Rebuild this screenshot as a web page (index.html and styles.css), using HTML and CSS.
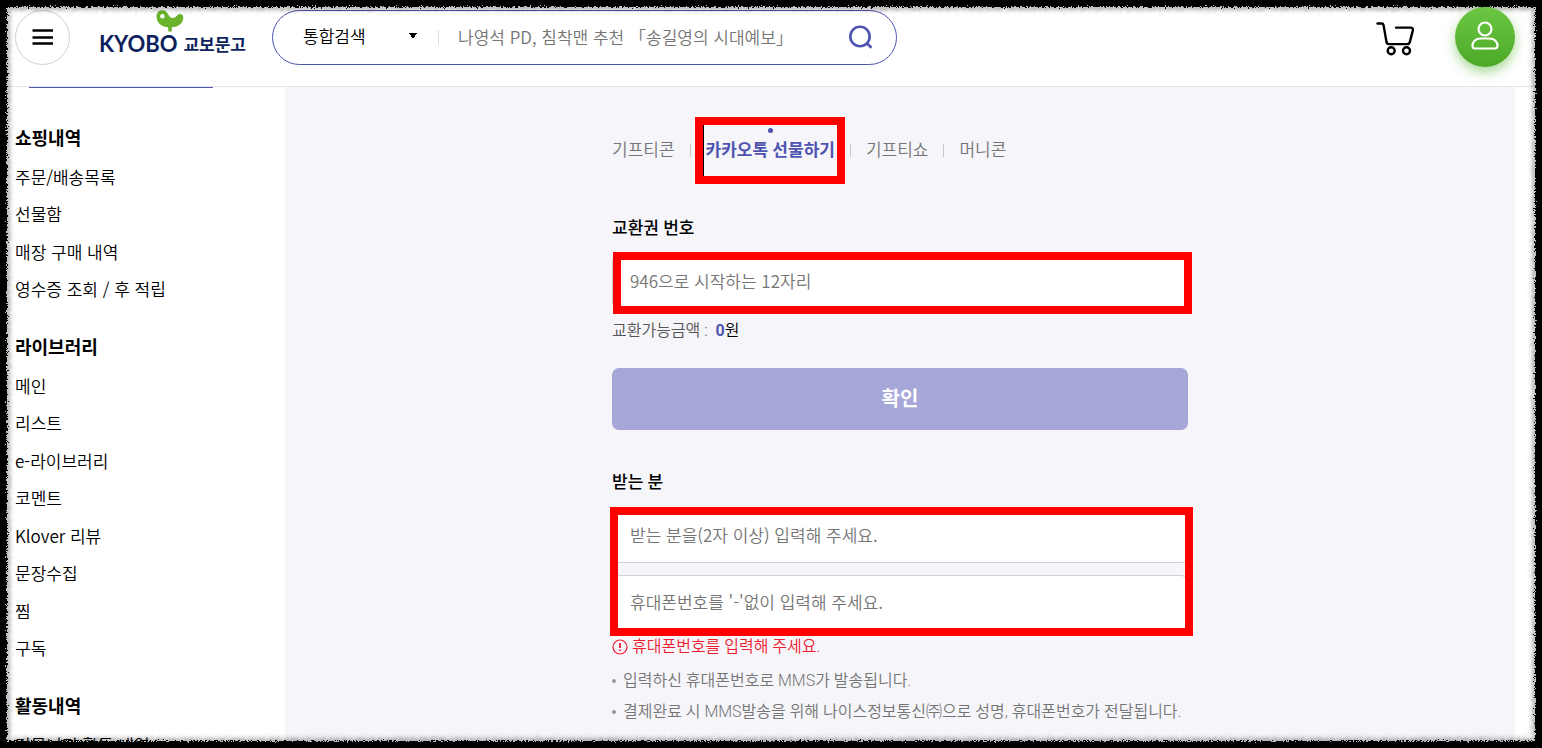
FILE: index.html
```html
<!DOCTYPE html>
<html lang="ko">
<head>
<meta charset="utf-8">
<title>교보문고</title>
<link rel="stylesheet" href="styles.css">
</head>
<body>
<header class="header">
  <button class="menu-btn" aria-label="메뉴"><svg width="22" height="18" viewBox="0 0 22 18"><path d="M0.500 2.500h20.500M0.500 9.500h20.500M0.500 15.500h20.500" stroke="#000" stroke-width="2.500"/></svg></button>
  <a class="logo" href="#">
    <svg class="logo-bird" width="28" height="22" viewBox="0 0 28 22"><path fill="#6ab42d" d="M6.300 .3C2.800.3.600 2.800.600 6c0 6.800 4.400 10.900 11.600 11.300v4.300h3.600v-4.300c7-.4 11.500-4.500 11.500-9.900 0-2-1.300-3.300-3.200-3.300-3.200 0-3.800 4-7.400 4C11.800 8.100 12.700.3 6.300 .3z"/><circle cx="6.400" cy="6.300" r="2.200" fill="#fff"/></svg>
    <span class="logo-text"><span class="logo-en">KYOBO</span><span class="logo-ko">교보문고</span></span>
  </a>
  <form class="search">
    <select class="search-type" aria-label="검색 범위"><option>통합검색</option></select>
    <input class="search-input" type="text" aria-label="검색어" placeholder="나영석 PD, 침착맨 추천 「송길영의 시대예보」">
    <button class="search-btn" type="button" aria-label="검색"><svg width="26" height="26" viewBox="0 0 26 26" fill="none" stroke="#4e54b0" stroke-width="2.600"><circle cx="12" cy="12.500" r="9.700"/><path d="M18.500 19l5 4.700"/></svg></button>
  </form>
  <div class="actions">
    <a class="cart" href="#" aria-label="장바구니"><svg width="38" height="38" viewBox="0 -4 38 38" fill="none" stroke="#000" stroke-width="2.400" stroke-linecap="round" stroke-linejoin="round"><path d="M1.500 1.500h4.300q1.400 0 1.700 1.400l3 17.200q.4 2 2.300 2h18.500q2 0 2.500-2l3-11.500q.6-3-2.200-3H20"/><circle cx="15.200" cy="28.700" r="3.500"/><circle cx="30.500" cy="28.700" r="3.500"/></svg></a>
    <a class="profile" href="#" aria-label="마이페이지"><svg width="28" height="32" viewBox="0 0 28 32" fill="none" stroke="#fff" stroke-width="2.200"><circle cx="14" cy="8" r="6.500"/><path d="M9.500 17.500h9c5 0 8 3.500 8 7 0 2-.8 3-2.400 3H3.900c-1.600 0-2.400-1-2.400-3 0-3.500 3-7 8-7z"/></svg></a>
  </div>
</header>
<div class="page">
  <nav class="sidebar">
    <div class="side-card"></div>
    <h2 class="side-title">쇼핑내역</h2>
    <ul class="side-list">
      <li><a href="#">주문/배송목록</a></li><li><a href="#">선물함</a></li><li><a href="#">매장 구매 내역</a></li><li><a href="#">영수증 조회 / 후 적립</a></li>
    </ul>
    <h2 class="side-title">라이브러리</h2>
    <ul class="side-list">
      <li><a href="#">메인</a></li><li><a href="#">리스트</a></li><li><a href="#">e-라이브러리</a></li><li><a href="#">코멘트</a></li><li><a href="#">Klover 리뷰</a></li><li><a href="#">문장수집</a></li><li><a href="#">찜</a></li><li><a href="#">구독</a></li>
    </ul>
    <h2 class="side-title">활동내역</h2>
    <ul class="side-list"><li><a href="#">커뮤니티 활동 내역</a></li></ul>
  </nav>
  <main class="main">
    <form class="voucher">
      <div class="tabs">
        <a class="tab" href="#">기프티콘</a>
        <a class="tab tab-on" href="#">카카오톡 선물하기<span class="mark mark-tab"></span></a>
        <a class="tab" href="#">기프티쇼</a>
        <a class="tab" href="#">머니콘</a>
      </div>
      <label class="label" for="code">교환권 번호</label>
      <div class="field">
        <input class="input" id="code" type="text" placeholder="946으로 시작하는 12자리">
        <span class="mark mark-code"></span>
      </div>
      <p class="amount">교환가능금액 : <span class="won"><b>0</b>원</span></p>
      <button class="submit" type="button">확인</button>
      <label class="label" for="name">받는 분</label>
      <div class="field">
        <input class="input" id="name" type="text" placeholder="받는 분을(2자 이상) 입력해 주세요.">
        <input class="input" type="text" aria-label="휴대폰번호" placeholder="휴대폰번호를 '-'없이 입력해 주세요.">
        <span class="mark mark-pair"></span>
      </div>
      <p class="error"><svg width="16" height="16" viewBox="0 0 16 16"><circle cx="8" cy="8" r="7" fill="none" stroke="#ee1c2e" stroke-width="1.200"/><path d="M8 4v5M8 10.500v1.500" stroke="#ee1c2e" stroke-width="1.800"/></svg>휴대폰번호를 입력해 주세요.</p>
      <ul class="notes">
        <li>입력하신 휴대폰번호로 MMS가 발송됩니다.</li>
        <li>결제완료 시 MMS발송을 위해 나이스정보통신㈜으로 성명, 휴대폰번호가 전달됩니다.</li>
      </ul>
    </form>
  </main>
</div>
<svg class="frame" aria-hidden="true">
  <filter id="soft" x="0" y="0" width="100%" height="100%"><feTurbulence type="fractalNoise" baseFrequency="0.5" numOctaves="2" seed="9"/><feDisplacementMap in="SourceGraphic" scale="8" xChannelSelector="R" yChannelSelector="G"/><feGaussianBlur stdDeviation="0.8"/></filter>
  <filter id="rough" x="0" y="0" width="100%" height="100%"><feTurbulence type="fractalNoise" baseFrequency="0.6" numOctaves="3" seed="4"/><feDisplacementMap in="SourceGraphic" scale="6" xChannelSelector="R" yChannelSelector="G"/><feGaussianBlur stdDeviation="0.3"/></filter>
  <g filter="url(#soft)" fill="none">
    <rect class="frame-soft" width="100%" height="100%"/>
    <rect class="frame-mid" width="100%" height="100%"/>
  </g>
  <g filter="url(#rough)" fill="none">
    <rect class="frame-dark" width="100%" height="100%"/>
  </g>
  <rect class="frame-edge" width="100%" height="100%" fill="none"/>
</svg>
</body>
</html>
```
FILE: styles.css
```css
* { box-sizing: border-box; }
body {
  margin: 0;
  height: 100vh;
  overflow: hidden;
  display: flex;
  flex-direction: column;
  background: #fff;
  color: #000;
  font-family: Roboto, "Noto Sans CJK KR", sans-serif;
  font-size: 17px;
  font-weight: 350;
  line-height: 25px;
}
a { color: inherit; text-decoration: none; }
ul, p, h2 { margin: 0; padding: 0; }
ul { list-style: none; }
button, input, select { font: inherit; color: inherit; }
button { cursor: pointer; border: 0; background: none; padding: 0; }
svg { display: block; }

.header {
  flex: none;
  display: flex;
  align-items: center;
  padding: 7px 27px 19px 15px;
  border-bottom: 1px solid #e5e5e5;
  background: #fff;
}
.menu-btn {
  width: 55px;
  height: 55px;
  border: 1px solid #d0d0d0;
  border-radius: 50%;
  display: grid;
  place-items: center;
}
.logo { align-self: flex-start; margin: 3px 0 0 29px; width: 173px; color: #0d1f5c; }
.logo-bird { margin-left: 57px; }
.logo-text { display: flex; align-items: center; gap: 6px; line-height: 24px; font-weight: 700; }
.logo-en { font-family: Lato, sans-serif; font-size: 22px; }
.logo-ko { font-family: "Noto Sans CJK KR", sans-serif; font-size: 17px; }

.search {
  width: 625px;
  height: 55px;
  display: flex;
  align-items: center;
  padding: 0 22px 0 30px;
  border: 1px solid #4e54b0;
  border-radius: 28px;
}
.search-type {
  appearance: none;
  width: 136px;
  height: 25px;
  padding: 0;
  border: 0;
  background-color: #fff;
  background-image:
    linear-gradient(#ddd, #ddd),
    linear-gradient(to bottom left, #000 50%, transparent 51%),
    linear-gradient(to bottom right, #000 50%, transparent 51%);
  background-size: 1px 15px, 4px 6px, 4px 6px;
  background-position: right center, 106px 8px, 110px 8px;
  background-repeat: no-repeat;
}
.search-input { flex: 1; min-width: 0; padding: 0 0 2px 19px; border: 0; outline: 0; background: none; }
.search-input, .input, .side-list { font-family: "Noto Sans CJK KR", sans-serif; }
.search-input::placeholder, .input::placeholder { color: #757575; opacity: 1; }
.search-btn { width: 26px; }
.actions { margin-left: auto; display: flex; align-items: center; gap: 41px; }
.profile {
  position: relative;
  z-index: 2;
  width: 60px;
  height: 60px;
  border-radius: 50%;
  display: grid;
  place-items: center;
  background: linear-gradient(#6cc644, #4ba926);
  box-shadow: 0 5px 12px rgba(86, 180, 48, .5);
}

.page { flex: 1; min-height: 0; overflow: hidden; display: flex; padding-right: 27px; }
.sidebar { flex: none; width: 285px; padding: 0 15px; }
.side-card { width: 184px; height: 1px; margin: 0 14px 38px; background: #4e54b0; }
.side-title { font-size: 18px; line-height: 25px; font-weight: 700; padding-bottom: 7px; }
.side-list { padding-bottom: 27px; }
.side-list li { padding: 6px 0; }
.side-list li:nth-child(even) { padding-bottom: 7px; }

.main { flex: 1; background: #f5f5fa; }
.voucher { width: 576px; margin: 0 auto; padding-top: 51px; }
.tabs { display: flex; color: #757575; }
.tab { position: relative; }
.tab + .tab { padding-left: 31px; }
.tab + .tab::before { content: ""; position: absolute; left: 15px; top: 6px; width: 1px; height: 13px; background: #c8c8c8; }
.tab-on { color: #4e54b0; font-weight: 700; }
.tab-on::after { content: ""; position: absolute; left: calc(50% + 13px); top: -10px; width: 5px; height: 5px; border-radius: 50%; background: #4e54b0; }
.label { display: block; margin-top: 53px; font-weight: 500; }
.field { position: relative; margin-top: 13px; display: grid; gap: 12px; }
.input { display: block; width: 100%; height: 55px; padding: 0 17px 2px; border: 1px solid #d0d0d0; border-radius: 7px; background: #fff; }
.amount { margin-top: 9px; font-size: 16px; color: #555; }
.won { margin-left: 4px; color: #000; }
.won b { color: #4e54b0; font-weight: 700; }
.submit { width: 100%; height: 62px; margin-top: 25px; border-radius: 7px; background: #a6a7d8; color: #fff; font-size: 20px; font-weight: 700; }
.submit + .label { margin-top: 40px; }
.error { display: flex; align-items: center; gap: 4px; margin-top: 4px; font-size: 16px; color: #ee1c2e; }
.notes { margin-top: 6px; font-size: 16px; color: #757575; }
.notes li { position: relative; padding: 3px 0 3px 11px; white-space: nowrap; }
.notes li::before { content: ""; position: absolute; left: 0; top: 14px; width: 4px; height: 4px; border-radius: 50%; background: #999; }

.mark { position: absolute; border: 8px solid #f00; pointer-events: none; }
.mark-tab { inset: -21px -10px -21px 20px; }
.mark-tab::before { content: ""; position: absolute; inset: 0 auto 0 0; width: 1px; background: #000; }
.mark-code { inset: -2px -4px -5px 1px; }
.mark-pair { inset: -1px -5px -6px -2px; }

.frame { position: fixed; z-index: 1; inset: 0; width: 100%; height: 100%; pointer-events: none; mix-blend-mode: multiply; }
.frame-soft { stroke: #e6e6e6; stroke-width: 25px; stroke-opacity: .7; }
.frame-mid { stroke: #c0c0c0; stroke-width: 20px; }
.frame-dark { stroke: #000; stroke-width: 14px; }
.frame-edge { stroke: #000; stroke-width: 10px; }
```
